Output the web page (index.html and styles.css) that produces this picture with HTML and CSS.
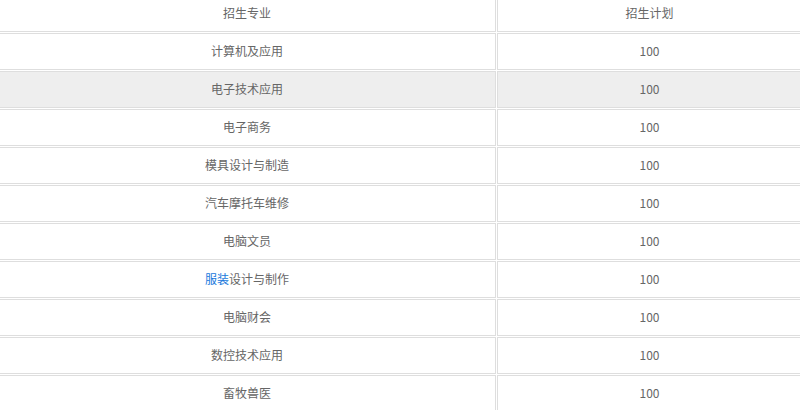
FILE: index.html
```html
<!DOCTYPE html>
<html lang="zh">
<head>
<meta charset="utf-8">
<link rel="stylesheet" href="styles.css">
</head>
<body>
<table class="plan">
  <tr><td class="c1">招生专业</td><td class="c2">招生计划</td></tr>
  <tr><td class="c1">计算机及应用</td><td class="c2">100</td></tr>
  <tr class="hl"><td class="c1">电子技术应用</td><td class="c2">100</td></tr>
  <tr><td class="c1">电子商务</td><td class="c2">100</td></tr>
  <tr><td class="c1">模具设计与制造</td><td class="c2">100</td></tr>
  <tr><td class="c1">汽车摩托车维修</td><td class="c2">100</td></tr>
  <tr><td class="c1">电脑文员</td><td class="c2">100</td></tr>
  <tr><td class="c1"><a class="link" href="#">服装</a>设计与制作</td><td class="c2">100</td></tr>
  <tr><td class="c1">电脑财会</td><td class="c2">100</td></tr>
  <tr><td class="c1">数控技术应用</td><td class="c2">100</td></tr>
  <tr><td class="c1">畜牧兽医</td><td class="c2">100</td></tr>
</table>
</body>
</html>
```

FILE: styles.css
```css
html, body {
  margin: 0;
  padding: 0;
  background: #fff;
  overflow: hidden;
}
body {
  font-family: "Noto Sans CJK SC", "Noto Sans", sans-serif;
  font-size: 12px;
  color: #666;
}
.plan {
  border-collapse: separate;
  border-spacing: 1px;
  width: 806px;
  margin: -6px 0 0 -3px;
}
.plan td {
  border: 1px solid #dedede;
  height: 34px;
  padding: 0 0 1px;
  text-align: center;
  vertical-align: middle;
  line-height: 16px;
}
.plan .c1 {
  width: 496px;
}
.plan .hl td {
  background: #eeeeee;
}
.link {
  color: #2079dc;
  text-decoration: none;
}
```
